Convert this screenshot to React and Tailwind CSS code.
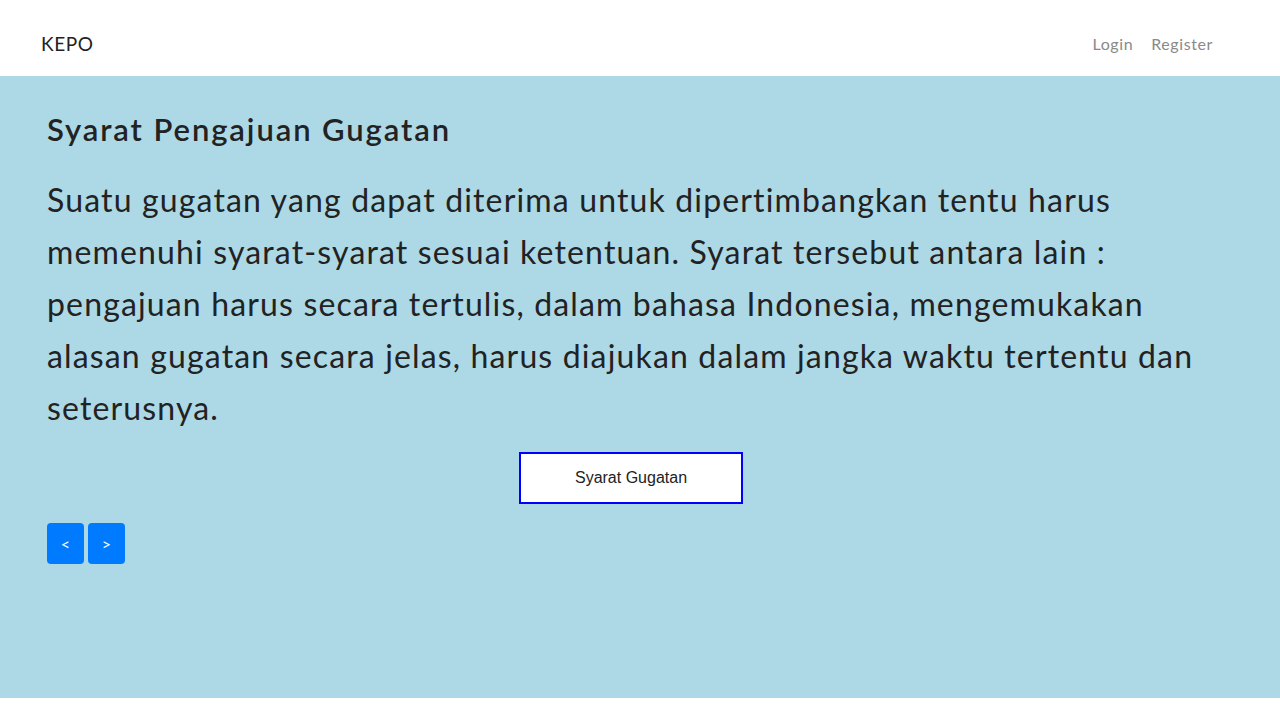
import { useState } from 'react';

const slides = [
  {
    judul: 'Syarat Pengajuan Gugatan',
    isi: 'Suatu gugatan yang dapat diterima untuk dipertimbangkan tentu harus memenuhi syarat-syarat sesuai ketentuan. Syarat tersebut antara lain : pengajuan harus secara tertulis, dalam bahasa Indonesia, mengemukakan alasan gugatan secara jelas, harus diajukan dalam jangka waktu tertentu dan seterusnya.',
    tombol: 'Syarat Gugatan',
  },
];

export default function App() {
  const [index, setIndex] = useState(0);
  const slide = slides[index];

  return (
    <div className="min-h-[720px] bg-white font-['Lato',sans-serif]">
      {/* Navbar */}
      <nav className="h-[76px] flex items-center justify-between pt-[12px] pl-[41px] pr-[67px] bg-white shadow-[0_1px_2px_rgba(0,0,0,0.08)]">
        <span className="text-[19px] tracking-[0.6px] text-[#222]">KEPO</span>
        <div className="flex items-center gap-[18px] text-[16px] tracking-[0.6px] text-[#8a8a8a]">
          <a href="#">Login</a>
          <a href="#">Register</a>
        </div>
      </nav>

      {/* Konten */}
      <section className="h-[622px] bg-[#add8e6] pl-[47px] pr-[65px] pt-[30px]">
        <h2 className="text-[31px] font-semibold tracking-[1.9px] text-[#222] leading-[46px]">{slide.judul}</h2>
        <p className="mt-[22px] text-[32px] leading-[52px] tracking-[1.15px] text-[#222]">{slide.isi}</p>
        <div className="flex justify-center mt-[18px]">
          <button className="w-[224px] h-[52px] border-2 border-[#0000ff] bg-white text-[16px] text-[#222] font-['Liberation_Sans',sans-serif]">
            {slide.tombol}
          </button>
        </div>
        <div className="flex gap-[4px] mt-[19px]">
          <button
            onClick={() => setIndex(Math.max(0, index - 1))}
            className="w-[37px] h-[41px] rounded-[4px] bg-[#007bff] text-white text-[16px]"
          >
            &lt;
          </button>
          <button
            onClick={() => setIndex(Math.min(slides.length - 1, index + 1))}
            className="w-[37px] h-[41px] rounded-[4px] bg-[#007bff] text-white text-[16px]"
          >
            &gt;
          </button>
        </div>
      </section>
    </div>
  );
}
